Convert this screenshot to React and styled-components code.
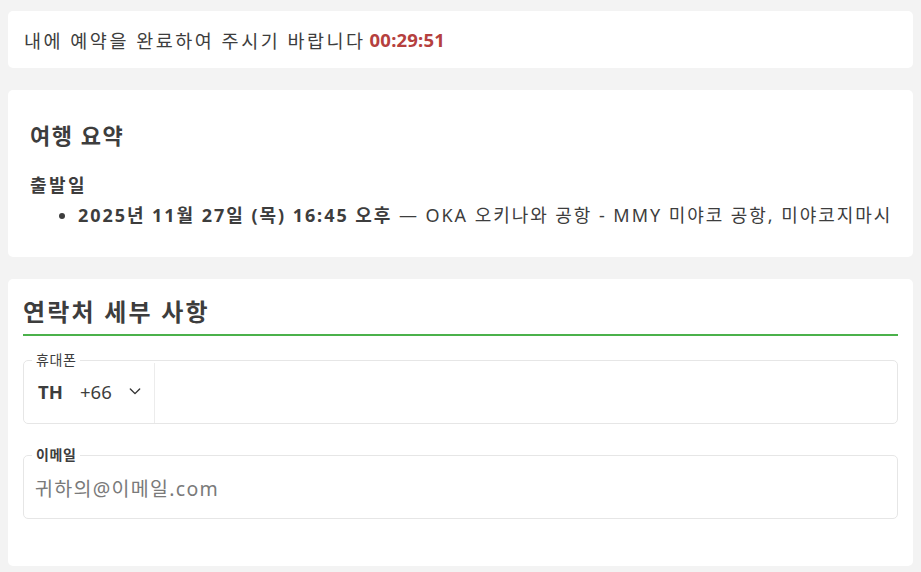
import React from "react";
import styled, { createGlobalStyle } from "styled-components";

const GlobalStyle = createGlobalStyle`
  body {
    margin: 8px;
    background: #f3f3f3;
    font-family: "Noto Sans", "Noto Sans CJK KR", sans-serif;
    color: #3d3d3d;
  }
`;

const Page = styled.main`
  display: flex;
  flex-direction: column;
  gap: 22px;
  padding-top: 3px;
`;

const Card = styled.section`
  background: #fff;
  border-radius: 5px;
  box-sizing: border-box;
`;

const TimerCard = styled(Card)`
  height: 57px;
  display: flex;
  align-items: center;
  padding: 0 16px;
  font-size: 18.5px;
  letter-spacing: 2.5px;
  white-space: nowrap;
`;

const Timer = styled.span`
  color: #b5403e;
  font-weight: 700;
  letter-spacing: 0.2px;
  margin-left: 4px;
`;

const SummaryCard = styled(Card)`
  height: 167px;
  padding: 28px 22px 0;

  h2 {
    margin: 0 0 20px;
    font-size: 22px;
    font-weight: 600;
    line-height: 34px;
    letter-spacing: 1.5px;
  }

  h3 {
    margin: 0 0 4px;
    font-size: 18px;
    font-weight: 700;
    line-height: 26px;
    letter-spacing: 2.4px;
  }

  ul {
    margin: 0;
    padding-left: 48px;
    font-size: 18px;
    line-height: 26px;
    letter-spacing: 1.95px;
    white-space: nowrap;
  }

  b {
    font-weight: 700;
  }
`;

const ContactCard = styled(Card)`
  padding: 14px 15px 47px;
  display: flex;
  flex-direction: column;
`;

const ContactTitle = styled.h2`
  margin: 0 0 17px;
  font-size: 24px;
  font-weight: 700;
  line-height: 38px;
  letter-spacing: 2.2px;
  padding-bottom: 3px;
  border-bottom: 2px solid #4bb14b;
`;

const Field = styled.fieldset`
  margin: 0 0 ${(p) => p.$mb || 0}px;
  padding: 0;
  border: 1px solid #e6e6e6;
  border-radius: 5px;

  legend {
    margin-left: 8px;
    padding: 0 4px;
    font-size: 14px;
    line-height: 14px;
    letter-spacing: 0.6px;
    font-weight: ${(p) => (p.$boldLegend ? 700 : 400)};
    color: #3d3d3d;
  }
`;

const FieldBody = styled.div`
  display: flex;
  align-items: stretch;
  height: 56px;
`;

const CountryPicker = styled.div`
  display: flex;
  align-items: center;
  width: 116px;
  padding: 0 0 4px 14px;
  margin-top: -4px;
  border-right: 1px solid #ececec;
  font-size: 18.5px;

  strong {
    font-weight: 700;
    width: 42px;
  }

  span {
    margin-right: 16px;
  }
`;

const Input = styled.input`
  flex: 1;
  min-width: 0;
  border: none;
  outline: none;
  background: none;
  padding: 0 11px 4px;
  font-family: "Noto Sans", "Noto Sans CJK KR", sans-serif;
  font-size: 19.5px;
  letter-spacing: 1.3px;
  color: #3d3d3d;

  &::placeholder {
    color: #7a7a7a;
  }
`;

function Chevron() {
  return (
    <svg width="14" height="14" viewBox="0 0 24 24" fill="none" stroke="#333" strokeWidth="2.4" strokeLinecap="round" strokeLinejoin="round">
      <path d="M4 8.5l8 8 8-8" />
    </svg>
  );
}

export default function App() {
  return (
    <>
      <GlobalStyle />
      <Page>
        <TimerCard>
          내에 예약을 완료하여 주시기 바랍니다 <Timer>00:29:51</Timer>
        </TimerCard>
        <SummaryCard>
          <h2>여행 요약</h2>
          <h3>출발일</h3>
          <ul>
            <li>
              <b>2025년 11월 27일 (목) 16:45 오후</b> — OKA 오키나와 공항 - MMY 미야코 공항, 미야코지마시
            </li>
          </ul>
        </SummaryCard>
        <ContactCard>
          <ContactTitle>연락처 세부 사항</ContactTitle>
          <Field $mb={24}>
            <legend>휴대폰</legend>
            <FieldBody>
              <CountryPicker>
                <strong>TH</strong>
                <span>+66</span>
                <Chevron />
              </CountryPicker>
              <Input type="tel" />
            </FieldBody>
          </Field>
          <Field $boldLegend>
            <legend>이메일</legend>
            <FieldBody>
              <Input type="email" placeholder="귀하의@이메일.com" />
            </FieldBody>
          </Field>
        </ContactCard>
      </Page>
    </>
  );
}
